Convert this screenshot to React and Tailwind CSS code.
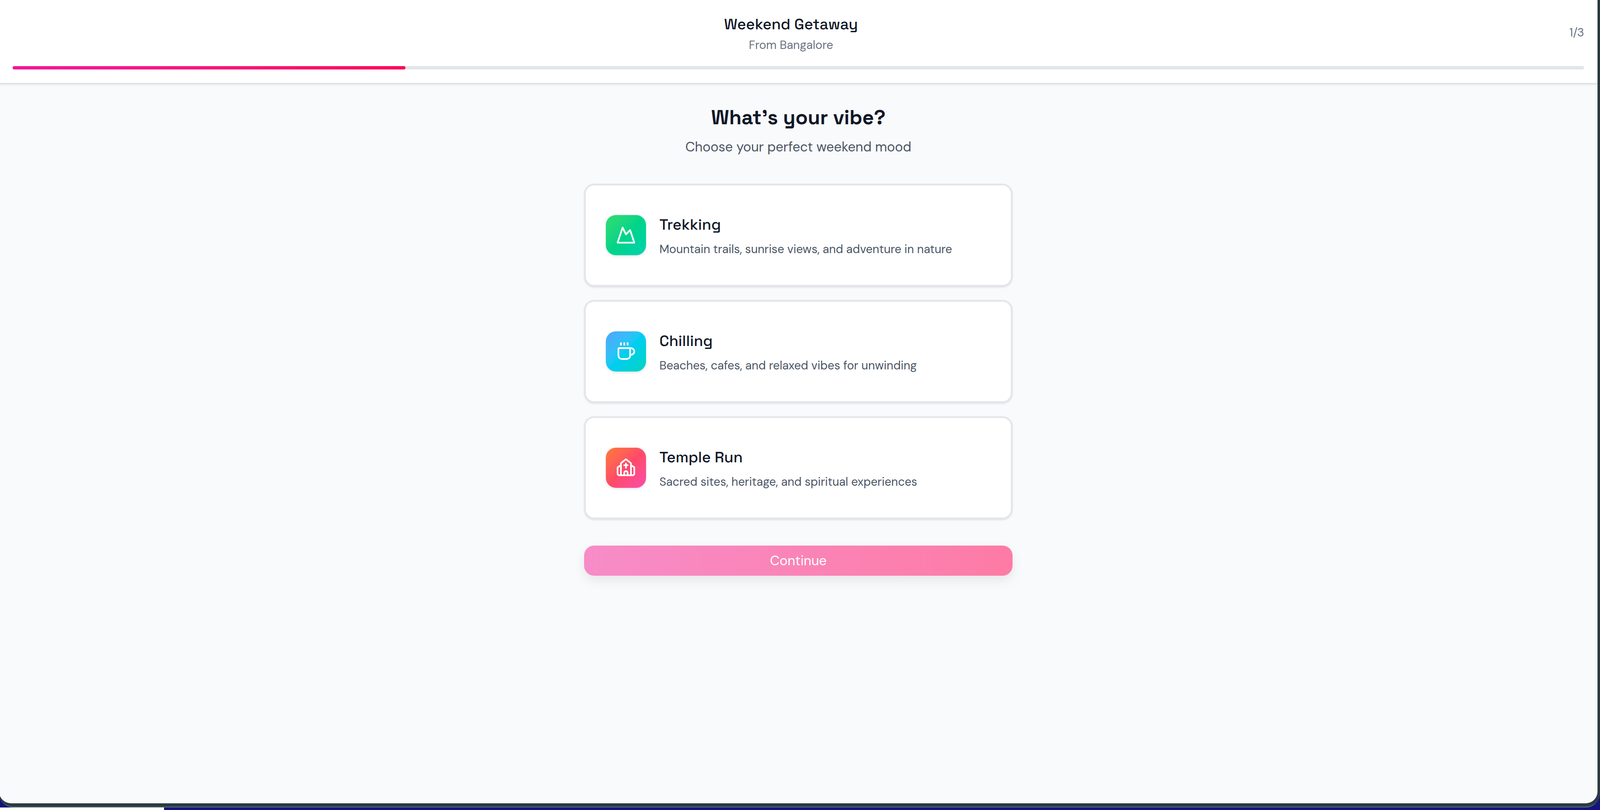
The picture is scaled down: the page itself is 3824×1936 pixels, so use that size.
import { Mountain, Coffee, Church } from 'lucide-react'

const vibes = [
  {
    title: 'Trekking',
    desc: 'Mountain trails, sunrise views, and adventure in nature',
    icon: Mountain,
    tone: 'bg-linear-to-br from-[#2ede6f] via-[#00d488] to-[#00d2b0]',
  },
  {
    title: 'Chilling',
    desc: 'Beaches, cafes, and relaxed vibes for unwinding',
    icon: Coffee,
    tone: 'bg-linear-to-br from-[#51a2ff] via-[#00cdf2] to-[#00d5be]',
  },
  {
    title: 'Temple Run',
    desc: 'Sacred sites, heritage, and spiritual experiences',
    icon: Church,
    tone: 'bg-linear-to-br from-[#ff7a2e] via-[#ff4a68] to-[#fb4ca8]',
  },
]

const display = "font-['Space_Grotesk','Inter',sans-serif]"
const body = "font-['DM_Sans','Lato','Noto_Sans',sans-serif]"

function VibeCard({ title, desc, icon: Icon, tone }) {
  return (
    <div className="flex h-[246px] items-center rounded-[24px] border-4 border-[#e3e5ea] bg-white px-[48px] shadow-[0_2px_4px_rgba(0,0,0,0.1)]">
      <div className={`mr-[32px] flex h-[96px] w-[96px] shrink-0 items-center justify-center rounded-[24px] shadow-[0_2px_6px_rgba(0,0,0,0.12)] ${tone}`}>
        <Icon size={48} strokeWidth={2} className="text-white" />
      </div>
      <div>
        <div className={`${display} text-[36px] leading-[56px] font-medium text-[#101828]`}>{title}</div>
        <div className={`${body} mt-[11px] text-[28px] leading-[40px] text-[#4a5565]`}>{desc}</div>
      </div>
    </div>
  )
}

export default function App() {
  return (
    <div className="flex h-screen w-full flex-col overflow-hidden bg-[#14127f]">
      <div className="-ml-[2px] min-h-0 flex-1 rounded-b-[34px] border-b-2 border-[#5a6b70] bg-[#2a3a40] pr-[6px] pb-[8px]">
        <div className="flex h-full flex-col overflow-hidden rounded-b-[28px] bg-[#f9fafb]">
          <header className="h-[202px] shrink-0 border-b-4 border-[#e2e4e8] bg-white px-[32px] pt-[34px] shadow-[0_2px_4px_rgba(0,0,0,0.04)]">
            <div className="flex h-[124px] items-start">
              <div className="flex-1 text-center">
                <div className={`${display} text-[36px] leading-[48px] font-medium text-[#101828]`}>Weekend Getaway</div>
                <div className={`${body} mt-[6px] text-[28px] leading-[40px] text-[#6a7282]`}>From Bangalore</div>
              </div>
              <div className={`${body} mt-[24px] text-[28px] leading-[40px] text-[#6a7282]`}>1/3</div>
            </div>
            <div className="h-[8px] overflow-hidden rounded-full bg-[#e2e5e9]">
              <div className="h-full w-1/4 rounded-full bg-linear-to-r from-[#f0189a] to-[#ff0558]" />
            </div>
          </header>

          <main className="mx-auto w-[1024px] pt-[47px]">
            <h1 className={`${display} text-center text-[48px] leading-[64px] font-semibold text-[#101828]`}>What’s your vibe?</h1>
            <p className={`${body} mt-[14px] text-center text-[32px] leading-[48px] text-[#4a5565]`}>Choose your perfect weekend mood</p>

            <div className="mt-[64px] flex flex-col gap-[32px]">
              {vibes.map(v => (
                <VibeCard key={v.title} {...v} />
              ))}
            </div>

            <button className={`${body} mt-[63px] h-[72px] w-full rounded-[24px] bg-linear-to-r from-[#f78cc8] to-[#fd7ba5] text-[32px] text-white shadow-[0_12px_28px_rgba(0,0,0,0.08)]`}>
              Continue
            </button>
          </main>
        </div>
      </div>
      <div className="flex h-[6px] shrink-0">
        <div className="w-[392px] bg-white" />
        <div className="flex-1 bg-[#14127f]" />
      </div>
    </div>
  )
}
